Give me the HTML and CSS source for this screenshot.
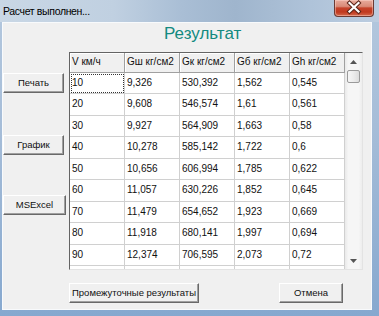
FILE: index.html
```html
<!DOCTYPE html>
<html>
<head>
<meta charset="utf-8">
<link rel="stylesheet" href="styles.css">
</head>
<body>
<div class="window">
  <div class="titlebar">
    <span class="title">Расчет выполнен...</span>
    <div class="close">
      <svg width="40" height="17" viewBox="0 0 40 17">
        <path d="M15.5 4 L24.5 12.5 M24.5 4 L15.5 12.5" stroke="#5a2418" stroke-width="4.2" stroke-linecap="square" fill="none"/>
        <path d="M15.5 4 L24.5 12.5 M24.5 4 L15.5 12.5" stroke="#ffffff" stroke-width="2.2" stroke-linecap="square" fill="none"/>
      </svg>
    </div>
  </div>
  <div class="frame">
    <div class="client">
      <div class="heading">Результат</div>
      <div class="main">
        <div class="side">
          <div class="btn side-btn b-print">Печать</div>
          <div class="btn side-btn b-graph">График</div>
          <div class="btn side-btn b-excel">MSExcel</div>
        </div>
        <div class="grid">
          <div class="cells">
            <div class="row head">
              <div class="cell">V км/ч</div>
              <div class="cell">Gш кг/см2</div>
              <div class="cell">Gк кг/см2</div>
              <div class="cell">Gб кг/см2</div>
              <div class="cell">Gh кг/см2</div>
            </div>
            <div class="row"><div class="cell focus">10</div><div class="cell">9,326</div><div class="cell">530,392</div><div class="cell">1,562</div><div class="cell">0,545</div></div>
            <div class="row"><div class="cell">20</div><div class="cell">9,608</div><div class="cell">546,574</div><div class="cell">1,61</div><div class="cell">0,561</div></div>
            <div class="row"><div class="cell">30</div><div class="cell">9,927</div><div class="cell">564,909</div><div class="cell">1,663</div><div class="cell">0,58</div></div>
            <div class="row"><div class="cell">40</div><div class="cell">10,278</div><div class="cell">585,142</div><div class="cell">1,722</div><div class="cell">0,6</div></div>
            <div class="row"><div class="cell">50</div><div class="cell">10,656</div><div class="cell">606,994</div><div class="cell">1,785</div><div class="cell">0,622</div></div>
            <div class="row"><div class="cell">60</div><div class="cell">11,057</div><div class="cell">630,226</div><div class="cell">1,852</div><div class="cell">0,645</div></div>
            <div class="row"><div class="cell">70</div><div class="cell">11,479</div><div class="cell">654,652</div><div class="cell">1,923</div><div class="cell">0,669</div></div>
            <div class="row"><div class="cell">80</div><div class="cell">11,918</div><div class="cell">680,141</div><div class="cell">1,997</div><div class="cell">0,694</div></div>
            <div class="row"><div class="cell">90</div><div class="cell">12,374</div><div class="cell">706,595</div><div class="cell">2,073</div><div class="cell">0,72</div></div>
            <div class="row"><div class="cell"></div><div class="cell"></div><div class="cell"></div><div class="cell"></div><div class="cell"></div></div>
          </div>
          <div class="vscroll">
            <div class="sb-btn">
              <svg width="7" height="4" viewBox="0 0 7 4"><path d="M0 4 L3.5 0 L7 4 Z" fill="#555"/></svg>
            </div>
            <div class="thumb"></div>
            <div class="track"></div>
            <div class="sb-btn">
              <svg width="7" height="4" viewBox="0 0 7 4"><path d="M0 0 L3.5 4 L7 0 Z" fill="#555"/></svg>
            </div>
          </div>
        </div>
      </div>
      <div class="bottom">
        <div class="btn b-inter">Промежуточные результаты</div>
        <div class="btn b-cancel">Отмена</div>
      </div>
    </div>
  </div>
</div>
</body>
</html>
```

FILE: styles.css
```css
html, body {
  margin: 0;
  padding: 0;
  background: #ffffff;
}

.window {
  width: 379px;
  height: 316px;
  display: flex;
  flex-direction: column;
  background: linear-gradient(180deg, #b4c8de 0%, #a6bdd8 40%, #86a8cf 100%);
  font-family: "Liberation Sans", Arial, sans-serif;
  color: #000;
  overflow: hidden;
}

.titlebar {
  height: 22px;
  flex: none;
  display: flex;
  align-items: flex-start;
  background: linear-gradient(90deg, #c9d7e5 0%, #c0d0e1 30%, #a9bed5 48%, #9fb5cd 62%, #afc3d9 82%, #bccde0 100%);
}

.title {
  font-size: 10.5px;
  letter-spacing: -0.35px;
  line-height: 22px;
  padding-left: 3px;
  color: #000;
}

.close {
  margin-left: auto;
  margin-right: 5px;
  width: 40px;
  height: 17px;
  box-sizing: border-box;
  border: 1px solid #6b3a33;
  border-top: none;
  border-radius: 0 0 4px 4px;
  background: linear-gradient(180deg, #e8ab9c 0%, #d98b78 40%, #c5432a 50%, #c0391f 75%, #d4694c 100%);
  box-shadow: inset 0 0 0 1px rgba(255, 220, 210, 0.45);
  display: flex;
}

.close svg {
  display: block;
  margin: -1px;
}

.frame {
  flex: 1;
  display: flex;
  padding: 0 7px 6px 2px;
}

.client {
  flex: 1;
  display: flex;
  flex-direction: column;
  background: #f0f0f0;
  border: 1px solid #f8fafc;
}

.heading {
  height: 29px;
  box-sizing: border-box;
  padding-top: 1px;
  padding-left: 161px;
  font-size: 17px;
  line-height: 20px;
  color: #138a80;
}

.main {
  height: 218px;
  display: flex;
}

.side {
  width: 66px;
  display: flex;
  flex-direction: column;
}

.btn {
  box-sizing: border-box;
  height: 20px;
  background: #f0f0f0;
  border-top: 1px solid #ffffff;
  border-left: 1px solid #ffffff;
  border-right: 1px solid #696969;
  border-bottom: 1px solid #696969;
  box-shadow: inset -1px -1px 0 #a0a0a0;
  font-size: 9.5px;
  line-height: 18px;
  text-align: center;
  white-space: nowrap;
  color: #111;
}

.side-btn {
  width: 61px;
}

.b-print { margin-top: 21px; }
.b-graph { margin-top: 42px; }
.b-excel { margin-top: 40px; width: 63px; }

.grid {
  width: 294px;
  height: 218px;
  box-sizing: border-box;
  border-top: 1px solid #646464;
  border-left: 1px solid #646464;
  border-right: 1px solid #e3e3e3;
  border-bottom: 1px solid #e3e3e3;
  display: flex;
  background: #ffffff;
}

.cells {
  width: 275px;
  height: 216px;
  overflow: hidden;
}

.row {
  display: flex;
  height: 21.5px;
}

.cell {
  box-sizing: border-box;
  width: 55px;
  flex: none;
  border-right: 1px solid #d0d0d0;
  border-bottom: 1px solid #d0d0d0;
  background: #ffffff;
  font-size: 10px;
  line-height: 20px;
  padding-left: 2px;
  white-space: nowrap;
  overflow: hidden;
  color: #111;
}

.row.head {
  height: 19.5px;
}

.row.head .cell {
  background: #f0f0f0;
  border-right: 1px solid #a0a0a0;
  border-bottom: 1px solid #a0a0a0;
  box-shadow: inset 1px 1px 0 #ffffff;
  line-height: 18px;
}

.cell.focus {
  outline: 1px dotted #333;
  outline-offset: -2px;
}

.vscroll {
  width: 17px;
  height: 216px;
  display: flex;
  flex-direction: column;
  background: linear-gradient(90deg, #e9e9e9 0%, #f6f6f6 20%, #f6f6f6 80%, #ededed 100%);
}

.sb-btn {
  height: 17px;
  flex: none;
  display: flex;
  align-items: center;
  justify-content: center;
}

.thumb {
  flex: none;
  height: 13px;
  margin: 0 2px 0 2px;
  box-sizing: border-box;
  border: 1px solid #9a9a9a;
  border-radius: 2px;
  background: linear-gradient(90deg, #f6f6f6 0%, #ececec 50%, #dcdcdc 100%);
}

.track {
  flex: 1;
}

.bottom {
  flex: 1;
  display: flex;
  align-items: flex-start;
  padding-top: 13px;
  padding-left: 66px;
}

.b-inter {
  width: 130px;
}

.b-cancel {
  width: 64px;
  margin-left: 80px;
}
```
